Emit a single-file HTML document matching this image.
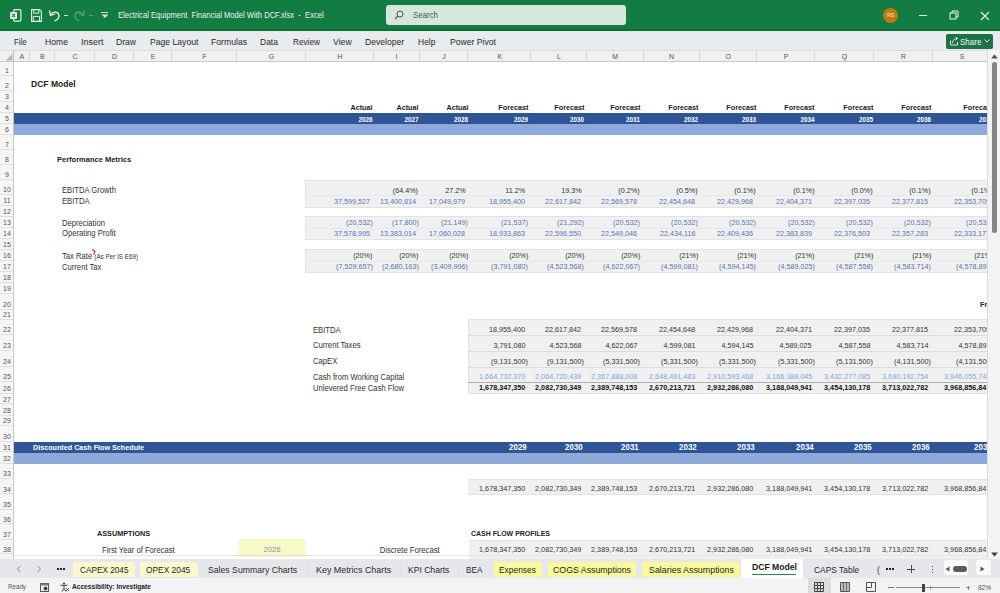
<!DOCTYPE html>
<html><head><meta charset="utf-8"><style>
html,body{margin:0;padding:0;}
body{width:1000px;height:593px;overflow:hidden;position:relative;background:#fff;font-family:"Liberation Sans",sans-serif;}
div{position:absolute;}
.t{white-space:nowrap;}
</style></head><body>
<div style="left:0px;top:0px;width:1000px;height:31px;background:#137c43;"></div>
<svg style="position:absolute;left:10px;top:9px" width="12" height="13" viewBox="0 0 12 13"><rect x="3.6" y="0.7" width="7.3" height="11.5" rx="1.2" fill="none" stroke="#e3f2e8" stroke-width="1.2"/><rect x="0.2" y="3" width="6.8" height="7" rx="0.9" fill="#eaf6ee"/><path d="M2.1 4.9 L5.1 8.1 M5.1 4.9 L2.1 8.1" stroke="#197a45" stroke-width="1.1"/></svg>
<svg style="position:absolute;left:31px;top:9px" width="11" height="13" viewBox="0 0 11 13"><path d="M0.6 0.6h8l1.8 1.8v10h-9.8z" fill="none" stroke="#e3f2e8" stroke-width="1.1"/><path d="M2.8 0.6v3.6h5v-3.6" fill="none" stroke="#e3f2e8" stroke-width="1"/><path d="M2.3 12.4v-5h6.2v5" fill="none" stroke="#e3f2e8" stroke-width="1"/></svg>
<svg style="position:absolute;left:48px;top:9px" width="14" height="13" viewBox="0 0 14 13"><path d="M3 5.5 C5 2 11 2.5 11 7 C11 9.5 9 11 6.5 12" fill="none" stroke="#e8f2ec" stroke-width="1.3"/><path d="M1.5 1.5 L2.5 6.5 L7 5" fill="none" stroke="#e8f2ec" stroke-width="1.3"/></svg>
<div style="left:64px;top:15px;width:4px;height:1px;background:#cfe3d6;"></div>
<svg style="position:absolute;left:72px;top:9px" width="14" height="13" viewBox="0 0 14 13"><path d="M11 5.5 C9 2 3 2.5 3 7 C3 9.5 5 11 7.5 12" fill="none" stroke="#5f9c78" stroke-width="1.3"/><path d="M12.5 1.5 L11.5 6.5 L7 5" fill="none" stroke="#5f9c78" stroke-width="1.3"/></svg>
<div style="left:89px;top:15px;width:4px;height:1px;background:#5f9c78;"></div>
<div style="left:101px;top:12px;width:7px;height:1px;background:#cfe3d6;"></div>
<svg style="position:absolute;left:101px;top:14px" width="8" height="5" viewBox="0 0 8 5"><path d="M0.5 0.5 L4 4 L7.5 0.5z" fill="#cfe3d6"/></svg>
<div class="t" style="left:118px;top:12.46px;font-size:8.2px;line-height:8.2px;color:#eaf3ee;transform:scaleX(0.9282);transform-origin:0 0;">Electrical Equipment&nbsp; Financial Model With DCF.xlsx&nbsp; -&nbsp; Excel</div>
<div style="left:385.5px;top:5px;width:240px;height:20px;background:#d5e6db;border-radius:3px;"></div>
<svg style="position:absolute;left:394px;top:10px" width="10" height="10" viewBox="0 0 10 10"><circle cx="6" cy="4" r="3" fill="none" stroke="#3d5a48" stroke-width="1"/><path d="M3.8 6.2 L1 9" stroke="#3d5a48" stroke-width="1.1"/></svg>
<div class="t" style="left:412.6px;top:11.86px;font-size:8.2px;line-height:8.2px;color:#44604f;transform:scaleX(0.9622);transform-origin:0 0;">Search</div>
<div style="left:883px;top:7.7px;width:15.4px;height:15.4px;background:#c27b14;border-radius:50%;"></div>
<div class="t" style="left:886.88px;top:13.14px;font-size:5.5px;line-height:5.5px;color:#f5e6c8;transform-origin:50% 0;">RS</div>
<div style="left:919px;top:15px;width:7.5px;height:1px;background:#e8f2ec;"></div>
<svg style="position:absolute;left:949px;top:10px" width="10" height="10" viewBox="0 0 10 10"><rect x="1" y="3" width="6" height="6" fill="none" stroke="#e8f2ec" stroke-width="1"/><path d="M3 3V1h6v6H7" fill="none" stroke="#e8f2ec" stroke-width="1"/></svg>
<svg style="position:absolute;left:980px;top:10.5px" width="10" height="10" viewBox="0 0 10 10"><path d="M1 1L9 9M9 1L1 9" stroke="#e8f2ec" stroke-width="1.1"/></svg>
<div style="left:0px;top:29px;width:1000px;height:2px;background:#0f6c39;"></div>
<div style="left:0px;top:31px;width:1000px;height:19px;background:#e9ebee;"></div>
<div style="left:0px;top:31px;width:1000px;height:1px;background:#dcefe3;"></div>
<div class="t" style="left:13.75px;top:38.19px;font-size:8.4px;line-height:8.4px;color:#2a2a2a;transform:scaleX(0.9235);transform-origin:0 0;">File</div>
<div class="t" style="left:44.5px;top:38.19px;font-size:8.4px;line-height:8.4px;color:#2a2a2a;transform:scaleX(1.0264);transform-origin:0 0;">Home</div>
<div class="t" style="left:80.5px;top:38.19px;font-size:8.4px;line-height:8.4px;color:#2a2a2a;transform:scaleX(1.0710);transform-origin:0 0;">Insert</div>
<div class="t" style="left:116.25px;top:38.19px;font-size:8.4px;line-height:8.4px;color:#2a2a2a;transform:scaleX(1.0203);transform-origin:0 0;">Draw</div>
<div class="t" style="left:149.5px;top:38.19px;font-size:8.4px;line-height:8.4px;color:#2a2a2a;transform:scaleX(1.0281);transform-origin:0 0;">Page Layout</div>
<div class="t" style="left:211.25px;top:38.19px;font-size:8.4px;line-height:8.4px;color:#2a2a2a;transform:scaleX(1.0355);transform-origin:0 0;">Formulas</div>
<div class="t" style="left:260px;top:38.19px;font-size:8.4px;line-height:8.4px;color:#2a2a2a;transform:scaleX(1.0144);transform-origin:0 0;">Data</div>
<div class="t" style="left:292.5px;top:38.19px;font-size:8.4px;line-height:8.4px;color:#2a2a2a;transform:scaleX(0.9803);transform-origin:0 0;">Review</div>
<div class="t" style="left:333px;top:38.19px;font-size:8.4px;line-height:8.4px;color:#2a2a2a;transform:scaleX(1.0384);transform-origin:0 0;">View</div>
<div class="t" style="left:365px;top:38.19px;font-size:8.4px;line-height:8.4px;color:#2a2a2a;transform:scaleX(1.0251);transform-origin:0 0;">Developer</div>
<div class="t" style="left:418px;top:38.19px;font-size:8.4px;line-height:8.4px;color:#2a2a2a;transform:scaleX(1.0129);transform-origin:0 0;">Help</div>
<div class="t" style="left:449.5px;top:38.19px;font-size:8.4px;line-height:8.4px;color:#2a2a2a;transform:scaleX(1.0263);transform-origin:0 0;">Power Pivot</div>
<div style="left:946px;top:33.5px;width:46.5px;height:15px;background:#1e7145;border-radius:2px;"></div>
<svg style="position:absolute;left:949px;top:36px" width="10" height="10" viewBox="0 0 10 10"><path d="M1.5 4.5v4.5h7v-3" fill="none" stroke="#e8f2ec" stroke-width="0.9"/><path d="M3.5 7 C3.5 4 5.5 2.5 8.5 2.5 M6.5 0.8 L8.6 2.5 L6.5 4.2" fill="none" stroke="#e8f2ec" stroke-width="0.9"/></svg>
<div class="t" style="left:960px;top:38.19px;font-size:8.4px;line-height:8.4px;color:#f2f8f4;transform:scaleX(0.9591);transform-origin:0 0;">Share</div>
<svg style="position:absolute;left:984px;top:39px" width="6" height="4" viewBox="0 0 6 4"><path d="M0.5 0.5L3 3L5.5 0.5" fill="none" stroke="#e8f2ec" stroke-width="0.9"/></svg>
<div style="left:0px;top:50px;width:987px;height:12px;background:#f0f0f0;"></div>
<div style="left:0px;top:61px;width:987px;height:1px;background:#c8c8c8;"></div>
<div style="left:0px;top:49.5px;width:1000px;height:1px;background:#dcdde0;"></div>
<div style="left:0px;top:62px;width:987px;height:497px;background:#ffffff;"></div>
<div style="left:0px;top:62px;width:14px;height:497px;background:#f5f5f5;"></div>
<div style="left:13px;top:50px;width:1px;height:509px;background:#c8c8c8;"></div>
<svg style="position:absolute;left:5px;top:53px" width="8" height="8" viewBox="0 0 8 8"><path d="M7.5 0.5V7.5H0.5z" fill="#b9b9b9"/></svg>
<div id="sheet" style="left:0;top:0;width:987px;height:559px;overflow:hidden;">
<div style="left:29px;top:51px;width:1px;height:10px;background:#d9d9d9;"></div>
<div class="t" style="left:19.42px;top:53.37px;font-size:7px;line-height:7px;color:#555;transform-origin:50% 0;">A</div>
<div style="left:54px;top:51px;width:1px;height:10px;background:#d9d9d9;"></div>
<div class="t" style="left:39.92px;top:53.37px;font-size:7px;line-height:7px;color:#555;transform-origin:50% 0;">B</div>
<div style="left:94px;top:51px;width:1px;height:10px;background:#d9d9d9;"></div>
<div class="t" style="left:72.47px;top:53.37px;font-size:7px;line-height:7px;color:#555;transform-origin:50% 0;">C</div>
<div style="left:133px;top:51px;width:1px;height:10px;background:#d9d9d9;"></div>
<div class="t" style="left:111.97px;top:53.37px;font-size:7px;line-height:7px;color:#555;transform-origin:50% 0;">D</div>
<div style="left:171px;top:51px;width:1px;height:10px;background:#d9d9d9;"></div>
<div class="t" style="left:150.67px;top:53.37px;font-size:7px;line-height:7px;color:#555;transform-origin:50% 0;">E</div>
<div style="left:236px;top:51px;width:1px;height:10px;background:#d9d9d9;"></div>
<div class="t" style="left:202.36px;top:53.37px;font-size:7px;line-height:7px;color:#555;transform-origin:50% 0;">F</div>
<div style="left:305px;top:51px;width:1px;height:10px;background:#d9d9d9;"></div>
<div class="t" style="left:268.78px;top:53.37px;font-size:7px;line-height:7px;color:#555;transform-origin:50% 0;">G</div>
<div style="left:373px;top:51px;width:1px;height:10px;background:#d9d9d9;"></div>
<div class="t" style="left:337.22px;top:53.37px;font-size:7px;line-height:7px;color:#555;transform-origin:50% 0;">H</div>
<div style="left:419px;top:51px;width:1px;height:10px;background:#d9d9d9;"></div>
<div class="t" style="left:395.53px;top:53.37px;font-size:7px;line-height:7px;color:#555;transform-origin:50% 0;">I</div>
<div style="left:467px;top:51px;width:1px;height:10px;background:#d9d9d9;"></div>
<div class="t" style="left:442.25px;top:53.37px;font-size:7px;line-height:7px;color:#555;transform-origin:50% 0;">J</div>
<div style="left:530px;top:51px;width:1px;height:10px;background:#d9d9d9;"></div>
<div class="t" style="left:497.42px;top:53.37px;font-size:7px;line-height:7px;color:#555;transform-origin:50% 0;">K</div>
<div style="left:586px;top:51px;width:1px;height:10px;background:#d9d9d9;"></div>
<div class="t" style="left:557.05px;top:53.37px;font-size:7px;line-height:7px;color:#555;transform-origin:50% 0;">L</div>
<div style="left:643px;top:51px;width:1px;height:10px;background:#d9d9d9;"></div>
<div class="t" style="left:612.33px;top:53.37px;font-size:7px;line-height:7px;color:#555;transform-origin:50% 0;">M</div>
<div style="left:699px;top:51px;width:1px;height:10px;background:#d9d9d9;"></div>
<div class="t" style="left:668.97px;top:53.37px;font-size:7px;line-height:7px;color:#555;transform-origin:50% 0;">N</div>
<div style="left:756px;top:51px;width:1px;height:10px;background:#d9d9d9;"></div>
<div class="t" style="left:725.53px;top:53.37px;font-size:7px;line-height:7px;color:#555;transform-origin:50% 0;">O</div>
<div style="left:814px;top:51px;width:1px;height:10px;background:#d9d9d9;"></div>
<div class="t" style="left:783.67px;top:53.37px;font-size:7px;line-height:7px;color:#555;transform-origin:50% 0;">P</div>
<div style="left:873px;top:51px;width:1px;height:10px;background:#d9d9d9;"></div>
<div class="t" style="left:841.78px;top:53.37px;font-size:7px;line-height:7px;color:#555;transform-origin:50% 0;">Q</div>
<div style="left:932px;top:51px;width:1px;height:10px;background:#d9d9d9;"></div>
<div class="t" style="left:900.97px;top:53.37px;font-size:7px;line-height:7px;color:#555;transform-origin:50% 0;">R</div>
<div style="left:990px;top:51px;width:1px;height:10px;background:#d9d9d9;"></div>
<div class="t" style="left:959.67px;top:53.37px;font-size:7px;line-height:7px;color:#555;transform-origin:50% 0;">S</div>
<div style="left:0px;top:75px;width:13px;height:1px;background:#e0e0e0;"></div>
<div class="t" style="left:5.05px;top:67.07px;font-size:7px;line-height:7px;color:#555;transform-origin:50% 0;">1</div>
<div style="left:0px;top:90px;width:13px;height:1px;background:#e0e0e0;"></div>
<div class="t" style="left:5.05px;top:82.07px;font-size:7px;line-height:7px;color:#555;transform-origin:50% 0;">2</div>
<div style="left:0px;top:101px;width:13px;height:1px;background:#e0e0e0;"></div>
<div class="t" style="left:5.05px;top:93.07px;font-size:7px;line-height:7px;color:#555;transform-origin:50% 0;">3</div>
<div style="left:0px;top:112px;width:13px;height:1px;background:#e0e0e0;"></div>
<div class="t" style="left:5.05px;top:104.07px;font-size:7px;line-height:7px;color:#555;transform-origin:50% 0;">4</div>
<div style="left:0px;top:123px;width:13px;height:1px;background:#e0e0e0;"></div>
<div class="t" style="left:5.05px;top:115.07px;font-size:7px;line-height:7px;color:#555;transform-origin:50% 0;">5</div>
<div style="left:0px;top:134px;width:13px;height:1px;background:#e0e0e0;"></div>
<div class="t" style="left:5.05px;top:126.07px;font-size:7px;line-height:7px;color:#555;transform-origin:50% 0;">6</div>
<div style="left:0px;top:149px;width:13px;height:1px;background:#e0e0e0;"></div>
<div class="t" style="left:5.05px;top:141.07px;font-size:7px;line-height:7px;color:#555;transform-origin:50% 0;">7</div>
<div style="left:0px;top:164px;width:13px;height:1px;background:#e0e0e0;"></div>
<div class="t" style="left:5.05px;top:156.07px;font-size:7px;line-height:7px;color:#555;transform-origin:50% 0;">8</div>
<div style="left:0px;top:179px;width:13px;height:1px;background:#e0e0e0;"></div>
<div class="t" style="left:5.05px;top:171.07px;font-size:7px;line-height:7px;color:#555;transform-origin:50% 0;">9</div>
<div style="left:0px;top:194px;width:13px;height:1px;background:#e0e0e0;"></div>
<div class="t" style="left:3.11px;top:186.07px;font-size:7px;line-height:7px;color:#555;transform-origin:50% 0;">10</div>
<div style="left:0px;top:205px;width:13px;height:1px;background:#e0e0e0;"></div>
<div class="t" style="left:3.37px;top:197.07px;font-size:7px;line-height:7px;color:#555;transform-origin:50% 0;">11</div>
<div style="left:0px;top:216px;width:13px;height:1px;background:#e0e0e0;"></div>
<div class="t" style="left:3.11px;top:208.07px;font-size:7px;line-height:7px;color:#555;transform-origin:50% 0;">12</div>
<div style="left:0px;top:227px;width:13px;height:1px;background:#e0e0e0;"></div>
<div class="t" style="left:3.11px;top:219.07px;font-size:7px;line-height:7px;color:#555;transform-origin:50% 0;">13</div>
<div style="left:0px;top:238px;width:13px;height:1px;background:#e0e0e0;"></div>
<div class="t" style="left:3.11px;top:230.07px;font-size:7px;line-height:7px;color:#555;transform-origin:50% 0;">14</div>
<div style="left:0px;top:249px;width:13px;height:1px;background:#e0e0e0;"></div>
<div class="t" style="left:3.11px;top:241.07px;font-size:7px;line-height:7px;color:#555;transform-origin:50% 0;">15</div>
<div style="left:0px;top:260px;width:13px;height:1px;background:#e0e0e0;"></div>
<div class="t" style="left:3.11px;top:252.07px;font-size:7px;line-height:7px;color:#555;transform-origin:50% 0;">16</div>
<div style="left:0px;top:271px;width:13px;height:1px;background:#e0e0e0;"></div>
<div class="t" style="left:3.11px;top:263.07px;font-size:7px;line-height:7px;color:#555;transform-origin:50% 0;">17</div>
<div style="left:0px;top:282px;width:13px;height:1px;background:#e0e0e0;"></div>
<div class="t" style="left:3.11px;top:274.07px;font-size:7px;line-height:7px;color:#555;transform-origin:50% 0;">18</div>
<div style="left:0px;top:293px;width:13px;height:1px;background:#e0e0e0;"></div>
<div class="t" style="left:3.11px;top:285.07px;font-size:7px;line-height:7px;color:#555;transform-origin:50% 0;">19</div>
<div style="left:0px;top:309px;width:13px;height:1px;background:#e0e0e0;"></div>
<div class="t" style="left:3.11px;top:300.57px;font-size:7px;line-height:7px;color:#555;transform-origin:50% 0;">20</div>
<div style="left:0px;top:319px;width:13px;height:1px;background:#e0e0e0;"></div>
<div class="t" style="left:3.11px;top:311.07px;font-size:7px;line-height:7px;color:#555;transform-origin:50% 0;">21</div>
<div style="left:0px;top:334px;width:13px;height:1px;background:#e0e0e0;"></div>
<div class="t" style="left:3.11px;top:326.07px;font-size:7px;line-height:7px;color:#555;transform-origin:50% 0;">22</div>
<div style="left:0px;top:350px;width:13px;height:1px;background:#e0e0e0;"></div>
<div class="t" style="left:3.11px;top:342.07px;font-size:7px;line-height:7px;color:#555;transform-origin:50% 0;">23</div>
<div style="left:0px;top:366px;width:13px;height:1px;background:#e0e0e0;"></div>
<div class="t" style="left:3.11px;top:358.07px;font-size:7px;line-height:7px;color:#555;transform-origin:50% 0;">24</div>
<div style="left:0px;top:381px;width:13px;height:1px;background:#e0e0e0;"></div>
<div class="t" style="left:3.11px;top:373.07px;font-size:7px;line-height:7px;color:#555;transform-origin:50% 0;">25</div>
<div style="left:0px;top:393px;width:13px;height:1px;background:#e0e0e0;"></div>
<div class="t" style="left:3.11px;top:385.07px;font-size:7px;line-height:7px;color:#555;transform-origin:50% 0;">26</div>
<div style="left:0px;top:403px;width:13px;height:1px;background:#e0e0e0;"></div>
<div class="t" style="left:3.11px;top:395.57px;font-size:7px;line-height:7px;color:#555;transform-origin:50% 0;">27</div>
<div style="left:0px;top:415px;width:13px;height:1px;background:#e0e0e0;"></div>
<div class="t" style="left:3.11px;top:406.57px;font-size:7px;line-height:7px;color:#555;transform-origin:50% 0;">28</div>
<div style="left:0px;top:425px;width:13px;height:1px;background:#e0e0e0;"></div>
<div class="t" style="left:3.11px;top:417.07px;font-size:7px;line-height:7px;color:#555;transform-origin:50% 0;">29</div>
<div style="left:0px;top:441px;width:13px;height:1px;background:#e0e0e0;"></div>
<div class="t" style="left:3.11px;top:433.07px;font-size:7px;line-height:7px;color:#555;transform-origin:50% 0;">30</div>
<div style="left:0px;top:451px;width:13px;height:1px;background:#e0e0e0;"></div>
<div class="t" style="left:3.11px;top:443.57px;font-size:7px;line-height:7px;color:#555;transform-origin:50% 0;">31</div>
<div style="left:0px;top:463px;width:13px;height:1px;background:#e0e0e0;"></div>
<div class="t" style="left:3.11px;top:454.57px;font-size:7px;line-height:7px;color:#555;transform-origin:50% 0;">32</div>
<div style="left:0px;top:478px;width:13px;height:1px;background:#e0e0e0;"></div>
<div class="t" style="left:3.11px;top:470.07px;font-size:7px;line-height:7px;color:#555;transform-origin:50% 0;">33</div>
<div style="left:0px;top:493px;width:13px;height:1px;background:#e0e0e0;"></div>
<div class="t" style="left:3.11px;top:485.57px;font-size:7px;line-height:7px;color:#555;transform-origin:50% 0;">34</div>
<div style="left:0px;top:509px;width:13px;height:1px;background:#e0e0e0;"></div>
<div class="t" style="left:3.11px;top:500.57px;font-size:7px;line-height:7px;color:#555;transform-origin:50% 0;">35</div>
<div style="left:0px;top:523px;width:13px;height:1px;background:#e0e0e0;"></div>
<div class="t" style="left:3.11px;top:515.57px;font-size:7px;line-height:7px;color:#555;transform-origin:50% 0;">36</div>
<div style="left:0px;top:539px;width:13px;height:1px;background:#e0e0e0;"></div>
<div class="t" style="left:3.11px;top:530.57px;font-size:7px;line-height:7px;color:#555;transform-origin:50% 0;">37</div>
<div style="left:0px;top:553px;width:13px;height:1px;background:#e0e0e0;"></div>
<div class="t" style="left:3.11px;top:545.57px;font-size:7px;line-height:7px;color:#555;transform-origin:50% 0;">38</div>
<div style="left:0px;top:569px;width:13px;height:1px;background:#e0e0e0;"></div>
<div class="t" style="left:3.11px;top:561.07px;font-size:7px;line-height:7px;color:#555;transform-origin:50% 0;">39</div>
<div style="left:14px;top:113px;width:973px;height:11px;background:#2f5597;"></div>
<div style="left:14px;top:124px;width:973px;height:11px;background:#8eaadb;"></div>
<div style="left:14px;top:442px;width:973px;height:10.5px;background:#2f5597;"></div>
<div style="left:14px;top:452.5px;width:973px;height:11px;background:#8eaadb;"></div>
<div class="t" style="left:31.4px;top:79.98px;font-size:9px;line-height:9px;color:#222;font-weight:bold;transform:scaleX(0.9469);transform-origin:0 0;">DCF Model</div>
<div class="t" style="right:614.5px;top:103.83px;font-size:8px;line-height:8px;color:#222;font-weight:bold;transform:scaleX(0.9);transform-origin:100% 0;">Actual</div>
<div class="t" style="right:568.5px;top:103.83px;font-size:8px;line-height:8px;color:#222;font-weight:bold;transform:scaleX(0.9);transform-origin:100% 0;">Actual</div>
<div class="t" style="right:519px;top:103.83px;font-size:8px;line-height:8px;color:#222;font-weight:bold;transform:scaleX(0.9);transform-origin:100% 0;">Actual</div>
<div class="t" style="right:459px;top:103.83px;font-size:8px;line-height:8px;color:#222;font-weight:bold;transform:scaleX(0.9);transform-origin:100% 0;">Forecast</div>
<div class="t" style="right:403px;top:103.83px;font-size:8px;line-height:8px;color:#222;font-weight:bold;transform:scaleX(0.9);transform-origin:100% 0;">Forecast</div>
<div class="t" style="right:347px;top:103.83px;font-size:8px;line-height:8px;color:#222;font-weight:bold;transform:scaleX(0.9);transform-origin:100% 0;">Forecast</div>
<div class="t" style="right:289px;top:103.83px;font-size:8px;line-height:8px;color:#222;font-weight:bold;transform:scaleX(0.9);transform-origin:100% 0;">Forecast</div>
<div class="t" style="right:231px;top:103.83px;font-size:8px;line-height:8px;color:#222;font-weight:bold;transform:scaleX(0.9);transform-origin:100% 0;">Forecast</div>
<div class="t" style="right:172.5px;top:103.83px;font-size:8px;line-height:8px;color:#222;font-weight:bold;transform:scaleX(0.9);transform-origin:100% 0;">Forecast</div>
<div class="t" style="right:114px;top:103.83px;font-size:8px;line-height:8px;color:#222;font-weight:bold;transform:scaleX(0.9);transform-origin:100% 0;">Forecast</div>
<div class="t" style="right:56px;top:103.83px;font-size:8px;line-height:8px;color:#222;font-weight:bold;transform:scaleX(0.9);transform-origin:100% 0;">Forecast</div>
<div class="t" style="right:-6px;top:103.83px;font-size:8px;line-height:8px;color:#222;font-weight:bold;transform:scaleX(0.9);transform-origin:100% 0;">Forecast</div>
<div class="t" style="right:614.5px;top:116.67px;font-size:6.3px;line-height:6.3px;color:#fff;font-weight:bold;transform-origin:100% 0;">2026</div>
<div class="t" style="right:568.5px;top:116.67px;font-size:6.3px;line-height:6.3px;color:#fff;font-weight:bold;transform-origin:100% 0;">2027</div>
<div class="t" style="right:519px;top:116.67px;font-size:6.3px;line-height:6.3px;color:#fff;font-weight:bold;transform-origin:100% 0;">2028</div>
<div class="t" style="right:459px;top:116.67px;font-size:6.3px;line-height:6.3px;color:#fff;font-weight:bold;transform-origin:100% 0;">2029</div>
<div class="t" style="right:403px;top:116.67px;font-size:6.3px;line-height:6.3px;color:#fff;font-weight:bold;transform-origin:100% 0;">2030</div>
<div class="t" style="right:347px;top:116.67px;font-size:6.3px;line-height:6.3px;color:#fff;font-weight:bold;transform-origin:100% 0;">2031</div>
<div class="t" style="right:289px;top:116.67px;font-size:6.3px;line-height:6.3px;color:#fff;font-weight:bold;transform-origin:100% 0;">2032</div>
<div class="t" style="right:231px;top:116.67px;font-size:6.3px;line-height:6.3px;color:#fff;font-weight:bold;transform-origin:100% 0;">2033</div>
<div class="t" style="right:172.5px;top:116.67px;font-size:6.3px;line-height:6.3px;color:#fff;font-weight:bold;transform-origin:100% 0;">2034</div>
<div class="t" style="right:114px;top:116.67px;font-size:6.3px;line-height:6.3px;color:#fff;font-weight:bold;transform-origin:100% 0;">2035</div>
<div class="t" style="right:56px;top:116.67px;font-size:6.3px;line-height:6.3px;color:#fff;font-weight:bold;transform-origin:100% 0;">2036</div>
<div class="t" style="right:-6px;top:116.67px;font-size:6.3px;line-height:6.3px;color:#fff;font-weight:bold;transform-origin:100% 0;">2037</div>
<div class="t" style="left:56.7px;top:155.63px;font-size:8px;line-height:8px;color:#222;font-weight:bold;transform:scaleX(0.9375);transform-origin:0 0;">Performance Metrics</div>
<div style="left:305px;top:180px;width:682px;height:27.5px;background:#f0f0f0;"></div>
<div style="left:305px;top:180px;width:682px;height:1px;background:#e2e2e2;"></div>
<div style="left:305px;top:206.5px;width:682px;height:1px;background:#e2e2e2;"></div>
<div style="left:305px;top:180px;width:1px;height:27.5px;background:#e2e2e2;"></div>
<div style="left:305px;top:216px;width:682px;height:24px;background:#f0f0f0;"></div>
<div style="left:305px;top:216px;width:682px;height:1px;background:#e2e2e2;"></div>
<div style="left:305px;top:239px;width:682px;height:1px;background:#e2e2e2;"></div>
<div style="left:305px;top:216px;width:1px;height:24px;background:#e2e2e2;"></div>
<div style="left:305px;top:249px;width:682px;height:24px;background:#f0f0f0;"></div>
<div style="left:305px;top:249px;width:682px;height:1px;background:#e2e2e2;"></div>
<div style="left:305px;top:272px;width:682px;height:1px;background:#e2e2e2;"></div>
<div style="left:305px;top:249px;width:1px;height:24px;background:#e2e2e2;"></div>
<div style="left:305px;top:195px;width:682px;height:1px;background:#e8e8e8;"></div>
<div style="left:305px;top:228px;width:682px;height:1px;background:#e8e8e8;"></div>
<div style="left:305px;top:261px;width:682px;height:1px;background:#e8e8e8;"></div>
<svg style="position:absolute;left:91px;top:249px" width="5" height="6" viewBox="0 0 5 6"><path d="M1 0.5 L4 2.5 L2.5 5.5" fill="none" stroke="#d0244a" stroke-width="1.2"/></svg>
<div class="t" style="left:62px;top:186.40px;font-size:8.5px;line-height:8.5px;color:#333333;transform:scaleX(0.9);transform-origin:0 0;">EBITDA Growth</div>
<div class="t" style="right:568.5px;top:186.83px;font-size:8px;line-height:8px;color:#333333;transform:scaleX(0.9);transform-origin:100% 0;">(64.4%)</div>
<div class="t" style="right:521.5px;top:186.83px;font-size:8px;line-height:8px;color:#333333;transform:scaleX(0.9);transform-origin:100% 0;">27.2%</div>
<div class="t" style="right:461.5px;top:186.83px;font-size:8px;line-height:8px;color:#333333;transform:scaleX(0.9);transform-origin:100% 0;">11.2%</div>
<div class="t" style="right:405.5px;top:186.83px;font-size:8px;line-height:8px;color:#333333;transform:scaleX(0.9);transform-origin:100% 0;">19.3%</div>
<div class="t" style="right:347px;top:186.83px;font-size:8px;line-height:8px;color:#333333;transform:scaleX(0.9);transform-origin:100% 0;">(0.2%)</div>
<div class="t" style="right:289px;top:186.83px;font-size:8px;line-height:8px;color:#333333;transform:scaleX(0.9);transform-origin:100% 0;">(0.5%)</div>
<div class="t" style="right:231px;top:186.83px;font-size:8px;line-height:8px;color:#333333;transform:scaleX(0.9);transform-origin:100% 0;">(0.1%)</div>
<div class="t" style="right:172.5px;top:186.83px;font-size:8px;line-height:8px;color:#333333;transform:scaleX(0.9);transform-origin:100% 0;">(0.1%)</div>
<div class="t" style="right:114px;top:186.83px;font-size:8px;line-height:8px;color:#333333;transform:scaleX(0.9);transform-origin:100% 0;">(0.0%)</div>
<div class="t" style="right:56px;top:186.83px;font-size:8px;line-height:8px;color:#333333;transform:scaleX(0.9);transform-origin:100% 0;">(0.1%)</div>
<div class="t" style="right:-6px;top:186.83px;font-size:8px;line-height:8px;color:#333333;transform:scaleX(0.9);transform-origin:100% 0;">(0.1%)</div>
<div class="t" style="left:62px;top:197.10px;font-size:8.5px;line-height:8.5px;color:#333333;transform:scaleX(0.9);transform-origin:0 0;">EBITDA</div>
<div class="t" style="right:617.0px;top:197.53px;font-size:8px;line-height:8px;color:#5873b8;transform:scaleX(0.9);transform-origin:100% 0;">37,599,527</div>
<div class="t" style="right:571.0px;top:197.53px;font-size:8px;line-height:8px;color:#5873b8;transform:scaleX(0.9);transform-origin:100% 0;">13,400,814</div>
<div class="t" style="right:521.5px;top:197.53px;font-size:8px;line-height:8px;color:#5873b8;transform:scaleX(0.9);transform-origin:100% 0;">17,049,979</div>
<div class="t" style="right:461.5px;top:197.53px;font-size:8px;line-height:8px;color:#5873b8;transform:scaleX(0.9);transform-origin:100% 0;">18,955,400</div>
<div class="t" style="right:405.5px;top:197.53px;font-size:8px;line-height:8px;color:#5873b8;transform:scaleX(0.9);transform-origin:100% 0;">22,617,842</div>
<div class="t" style="right:349.5px;top:197.53px;font-size:8px;line-height:8px;color:#5873b8;transform:scaleX(0.9);transform-origin:100% 0;">22,569,578</div>
<div class="t" style="right:291.5px;top:197.53px;font-size:8px;line-height:8px;color:#5873b8;transform:scaleX(0.9);transform-origin:100% 0;">22,454,648</div>
<div class="t" style="right:233.5px;top:197.53px;font-size:8px;line-height:8px;color:#5873b8;transform:scaleX(0.9);transform-origin:100% 0;">22,429,968</div>
<div class="t" style="right:175.0px;top:197.53px;font-size:8px;line-height:8px;color:#5873b8;transform:scaleX(0.9);transform-origin:100% 0;">22,404,371</div>
<div class="t" style="right:116.5px;top:197.53px;font-size:8px;line-height:8px;color:#5873b8;transform:scaleX(0.9);transform-origin:100% 0;">22,397,035</div>
<div class="t" style="right:58.5px;top:197.53px;font-size:8px;line-height:8px;color:#5873b8;transform:scaleX(0.9);transform-origin:100% 0;">22,377,815</div>
<div class="t" style="right:-3.5px;top:197.53px;font-size:8px;line-height:8px;color:#5873b8;transform:scaleX(0.9);transform-origin:100% 0;">22,353,709</div>
<div class="t" style="left:62px;top:218.90px;font-size:8.5px;line-height:8.5px;color:#333333;transform:scaleX(0.9);transform-origin:0 0;">Depreciation</div>
<div class="t" style="right:614.5px;top:219.33px;font-size:8px;line-height:8px;color:#5873b8;transform:scaleX(0.9);transform-origin:100% 0;">(20,532)</div>
<div class="t" style="right:568.5px;top:219.33px;font-size:8px;line-height:8px;color:#5873b8;transform:scaleX(0.9);transform-origin:100% 0;">(17,800)</div>
<div class="t" style="right:519px;top:219.33px;font-size:8px;line-height:8px;color:#5873b8;transform:scaleX(0.9);transform-origin:100% 0;">(21,149)</div>
<div class="t" style="right:459px;top:219.33px;font-size:8px;line-height:8px;color:#5873b8;transform:scaleX(0.9);transform-origin:100% 0;">(21,537)</div>
<div class="t" style="right:403px;top:219.33px;font-size:8px;line-height:8px;color:#5873b8;transform:scaleX(0.9);transform-origin:100% 0;">(21,292)</div>
<div class="t" style="right:347px;top:219.33px;font-size:8px;line-height:8px;color:#5873b8;transform:scaleX(0.9);transform-origin:100% 0;">(20,532)</div>
<div class="t" style="right:289px;top:219.33px;font-size:8px;line-height:8px;color:#5873b8;transform:scaleX(0.9);transform-origin:100% 0;">(20,532)</div>
<div class="t" style="right:231px;top:219.33px;font-size:8px;line-height:8px;color:#5873b8;transform:scaleX(0.9);transform-origin:100% 0;">(20,532)</div>
<div class="t" style="right:172.5px;top:219.33px;font-size:8px;line-height:8px;color:#5873b8;transform:scaleX(0.9);transform-origin:100% 0;">(20,532)</div>
<div class="t" style="right:114px;top:219.33px;font-size:8px;line-height:8px;color:#5873b8;transform:scaleX(0.9);transform-origin:100% 0;">(20,532)</div>
<div class="t" style="right:56px;top:219.33px;font-size:8px;line-height:8px;color:#5873b8;transform:scaleX(0.9);transform-origin:100% 0;">(20,532)</div>
<div class="t" style="right:-6px;top:219.33px;font-size:8px;line-height:8px;color:#5873b8;transform:scaleX(0.9);transform-origin:100% 0;">(20,532)</div>
<div class="t" style="left:62px;top:229.40px;font-size:8.5px;line-height:8.5px;color:#333333;transform:scaleX(0.9);transform-origin:0 0;">Operating Profit</div>
<div class="t" style="right:617.0px;top:229.83px;font-size:8px;line-height:8px;color:#5873b8;transform:scaleX(0.9);transform-origin:100% 0;">37,578,995</div>
<div class="t" style="right:571.0px;top:229.83px;font-size:8px;line-height:8px;color:#5873b8;transform:scaleX(0.9);transform-origin:100% 0;">13,383,014</div>
<div class="t" style="right:521.5px;top:229.83px;font-size:8px;line-height:8px;color:#5873b8;transform:scaleX(0.9);transform-origin:100% 0;">17,060,028</div>
<div class="t" style="right:461.5px;top:229.83px;font-size:8px;line-height:8px;color:#5873b8;transform:scaleX(0.9);transform-origin:100% 0;">18,933,863</div>
<div class="t" style="right:405.5px;top:229.83px;font-size:8px;line-height:8px;color:#5873b8;transform:scaleX(0.9);transform-origin:100% 0;">22,596,550</div>
<div class="t" style="right:349.5px;top:229.83px;font-size:8px;line-height:8px;color:#5873b8;transform:scaleX(0.9);transform-origin:100% 0;">22,549,046</div>
<div class="t" style="right:291.5px;top:229.83px;font-size:8px;line-height:8px;color:#5873b8;transform:scaleX(0.9);transform-origin:100% 0;">22,434,116</div>
<div class="t" style="right:233.5px;top:229.83px;font-size:8px;line-height:8px;color:#5873b8;transform:scaleX(0.9);transform-origin:100% 0;">22,409,436</div>
<div class="t" style="right:175.0px;top:229.83px;font-size:8px;line-height:8px;color:#5873b8;transform:scaleX(0.9);transform-origin:100% 0;">22,383,839</div>
<div class="t" style="right:116.5px;top:229.83px;font-size:8px;line-height:8px;color:#5873b8;transform:scaleX(0.9);transform-origin:100% 0;">22,376,503</div>
<div class="t" style="right:58.5px;top:229.83px;font-size:8px;line-height:8px;color:#5873b8;transform:scaleX(0.9);transform-origin:100% 0;">22,357,283</div>
<div class="t" style="right:-3.5px;top:229.83px;font-size:8px;line-height:8px;color:#5873b8;transform:scaleX(0.9);transform-origin:100% 0;">22,333,177</div>
<div class="t" style="left:62px;top:252.00px;font-size:8.5px;line-height:8.5px;color:#333333;transform:scaleX(0.9);transform-origin:0 0;">Tax Rate <span style="font-size:7px">(As Per IS E69)</span></div>
<div class="t" style="right:614.5px;top:252.43px;font-size:8px;line-height:8px;color:#333333;transform:scaleX(0.9);transform-origin:100% 0;">(20%)</div>
<div class="t" style="right:568.5px;top:252.43px;font-size:8px;line-height:8px;color:#333333;transform:scaleX(0.9);transform-origin:100% 0;">(20%)</div>
<div class="t" style="right:519px;top:252.43px;font-size:8px;line-height:8px;color:#333333;transform:scaleX(0.9);transform-origin:100% 0;">(20%)</div>
<div class="t" style="right:459px;top:252.43px;font-size:8px;line-height:8px;color:#333333;transform:scaleX(0.9);transform-origin:100% 0;">(20%)</div>
<div class="t" style="right:403px;top:252.43px;font-size:8px;line-height:8px;color:#333333;transform:scaleX(0.9);transform-origin:100% 0;">(20%)</div>
<div class="t" style="right:347px;top:252.43px;font-size:8px;line-height:8px;color:#333333;transform:scaleX(0.9);transform-origin:100% 0;">(20%)</div>
<div class="t" style="right:289px;top:252.43px;font-size:8px;line-height:8px;color:#333333;transform:scaleX(0.9);transform-origin:100% 0;">(21%)</div>
<div class="t" style="right:231px;top:252.43px;font-size:8px;line-height:8px;color:#333333;transform:scaleX(0.9);transform-origin:100% 0;">(21%)</div>
<div class="t" style="right:172.5px;top:252.43px;font-size:8px;line-height:8px;color:#333333;transform:scaleX(0.9);transform-origin:100% 0;">(21%)</div>
<div class="t" style="right:114px;top:252.43px;font-size:8px;line-height:8px;color:#333333;transform:scaleX(0.9);transform-origin:100% 0;">(21%)</div>
<div class="t" style="right:56px;top:252.43px;font-size:8px;line-height:8px;color:#333333;transform:scaleX(0.9);transform-origin:100% 0;">(21%)</div>
<div class="t" style="right:-6px;top:252.43px;font-size:8px;line-height:8px;color:#333333;transform:scaleX(0.9);transform-origin:100% 0;">(21%)</div>
<div class="t" style="left:62px;top:262.60px;font-size:8.5px;line-height:8.5px;color:#333333;transform:scaleX(0.9);transform-origin:0 0;">Current Tax</div>
<div class="t" style="right:614.5px;top:263.03px;font-size:8px;line-height:8px;color:#5873b8;transform:scaleX(0.9);transform-origin:100% 0;">(7,529,657)</div>
<div class="t" style="right:568.5px;top:263.03px;font-size:8px;line-height:8px;color:#5873b8;transform:scaleX(0.9);transform-origin:100% 0;">(2,680,163)</div>
<div class="t" style="right:519px;top:263.03px;font-size:8px;line-height:8px;color:#5873b8;transform:scaleX(0.9);transform-origin:100% 0;">(3,409,996)</div>
<div class="t" style="right:459px;top:263.03px;font-size:8px;line-height:8px;color:#5873b8;transform:scaleX(0.9);transform-origin:100% 0;">(3,791,080)</div>
<div class="t" style="right:403px;top:263.03px;font-size:8px;line-height:8px;color:#5873b8;transform:scaleX(0.9);transform-origin:100% 0;">(4,523,568)</div>
<div class="t" style="right:347px;top:263.03px;font-size:8px;line-height:8px;color:#5873b8;transform:scaleX(0.9);transform-origin:100% 0;">(4,622,067)</div>
<div class="t" style="right:289px;top:263.03px;font-size:8px;line-height:8px;color:#5873b8;transform:scaleX(0.9);transform-origin:100% 0;">(4,599,081)</div>
<div class="t" style="right:231px;top:263.03px;font-size:8px;line-height:8px;color:#5873b8;transform:scaleX(0.9);transform-origin:100% 0;">(4,594,145)</div>
<div class="t" style="right:172.5px;top:263.03px;font-size:8px;line-height:8px;color:#5873b8;transform:scaleX(0.9);transform-origin:100% 0;">(4,589,025)</div>
<div class="t" style="right:114px;top:263.03px;font-size:8px;line-height:8px;color:#5873b8;transform:scaleX(0.9);transform-origin:100% 0;">(4,587,558)</div>
<div class="t" style="right:56px;top:263.03px;font-size:8px;line-height:8px;color:#5873b8;transform:scaleX(0.9);transform-origin:100% 0;">(4,583,714)</div>
<div class="t" style="right:-6px;top:263.03px;font-size:8px;line-height:8px;color:#5873b8;transform:scaleX(0.9);transform-origin:100% 0;">(4,578,891)</div>
<div class="t" style="left:980px;top:300.62px;font-size:7.3px;line-height:7.3px;color:#222;font-weight:bold;transform-origin:0 0;">Free Cash Flow</div>
<div style="left:468px;top:319px;width:519px;height:74px;background:#f0f0f0;"></div>
<div style="left:468px;top:319px;width:519px;height:1px;background:#e2e2e2;"></div>
<div style="left:468px;top:319px;width:1px;height:74px;background:#e2e2e2;"></div>
<div style="left:468px;top:392.5px;width:519px;height:1px;background:#e2e2e2;"></div>
<div style="left:468px;top:335px;width:519px;height:1px;background:#dddddd;"></div>
<div style="left:468px;top:351px;width:519px;height:1px;background:#dddddd;"></div>
<div style="left:468px;top:367px;width:519px;height:1px;background:#dddddd;"></div>
<div style="left:468px;top:381.5px;width:519px;height:1px;background:#b0b0b0;"></div>
<div class="t" style="left:312.5px;top:325.80px;font-size:8.5px;line-height:8.5px;color:#333333;transform:scaleX(0.9);transform-origin:0 0;">EBITDA</div>
<div class="t" style="left:312.5px;top:341.30px;font-size:8.5px;line-height:8.5px;color:#333333;transform:scaleX(0.9);transform-origin:0 0;">Current Taxes</div>
<div class="t" style="left:312.5px;top:357.10px;font-size:8.5px;line-height:8.5px;color:#333333;transform:scaleX(0.9);transform-origin:0 0;">CapEX</div>
<div class="t" style="left:312.5px;top:372.50px;font-size:8.5px;line-height:8.5px;color:#333333;transform:scaleX(0.9);transform-origin:0 0;">Cash from Working Capital</div>
<div class="t" style="left:312.5px;top:383.80px;font-size:8.5px;line-height:8.5px;color:#333333;transform:scaleX(0.9);transform-origin:0 0;">Unlevered Free Cash Flow</div>
<div class="t" style="right:461.5px;top:326.23px;font-size:8px;line-height:8px;color:#333333;transform:scaleX(0.9);transform-origin:100% 0;">18,955,400</div>
<div class="t" style="right:405.5px;top:326.23px;font-size:8px;line-height:8px;color:#333333;transform:scaleX(0.9);transform-origin:100% 0;">22,617,842</div>
<div class="t" style="right:349.5px;top:326.23px;font-size:8px;line-height:8px;color:#333333;transform:scaleX(0.9);transform-origin:100% 0;">22,569,578</div>
<div class="t" style="right:291.5px;top:326.23px;font-size:8px;line-height:8px;color:#333333;transform:scaleX(0.9);transform-origin:100% 0;">22,454,648</div>
<div class="t" style="right:233.5px;top:326.23px;font-size:8px;line-height:8px;color:#333333;transform:scaleX(0.9);transform-origin:100% 0;">22,429,968</div>
<div class="t" style="right:175.0px;top:326.23px;font-size:8px;line-height:8px;color:#333333;transform:scaleX(0.9);transform-origin:100% 0;">22,404,371</div>
<div class="t" style="right:116.5px;top:326.23px;font-size:8px;line-height:8px;color:#333333;transform:scaleX(0.9);transform-origin:100% 0;">22,397,035</div>
<div class="t" style="right:58.5px;top:326.23px;font-size:8px;line-height:8px;color:#333333;transform:scaleX(0.9);transform-origin:100% 0;">22,377,815</div>
<div class="t" style="right:-3.5px;top:326.23px;font-size:8px;line-height:8px;color:#333333;transform:scaleX(0.9);transform-origin:100% 0;">22,353,709</div>
<div class="t" style="right:461.5px;top:341.73px;font-size:8px;line-height:8px;color:#333333;transform:scaleX(0.9);transform-origin:100% 0;">3,791,080</div>
<div class="t" style="right:405.5px;top:341.73px;font-size:8px;line-height:8px;color:#333333;transform:scaleX(0.9);transform-origin:100% 0;">4,523,568</div>
<div class="t" style="right:349.5px;top:341.73px;font-size:8px;line-height:8px;color:#333333;transform:scaleX(0.9);transform-origin:100% 0;">4,622,067</div>
<div class="t" style="right:291.5px;top:341.73px;font-size:8px;line-height:8px;color:#333333;transform:scaleX(0.9);transform-origin:100% 0;">4,599,081</div>
<div class="t" style="right:233.5px;top:341.73px;font-size:8px;line-height:8px;color:#333333;transform:scaleX(0.9);transform-origin:100% 0;">4,594,145</div>
<div class="t" style="right:175.0px;top:341.73px;font-size:8px;line-height:8px;color:#333333;transform:scaleX(0.9);transform-origin:100% 0;">4,589,025</div>
<div class="t" style="right:116.5px;top:341.73px;font-size:8px;line-height:8px;color:#333333;transform:scaleX(0.9);transform-origin:100% 0;">4,587,558</div>
<div class="t" style="right:58.5px;top:341.73px;font-size:8px;line-height:8px;color:#333333;transform:scaleX(0.9);transform-origin:100% 0;">4,583,714</div>
<div class="t" style="right:-3.5px;top:341.73px;font-size:8px;line-height:8px;color:#333333;transform:scaleX(0.9);transform-origin:100% 0;">4,578,891</div>
<div class="t" style="right:459px;top:357.53px;font-size:8px;line-height:8px;color:#333333;transform:scaleX(0.9);transform-origin:100% 0;">(9,131,500)</div>
<div class="t" style="right:403px;top:357.53px;font-size:8px;line-height:8px;color:#333333;transform:scaleX(0.9);transform-origin:100% 0;">(9,131,500)</div>
<div class="t" style="right:347px;top:357.53px;font-size:8px;line-height:8px;color:#333333;transform:scaleX(0.9);transform-origin:100% 0;">(5,331,500)</div>
<div class="t" style="right:289px;top:357.53px;font-size:8px;line-height:8px;color:#333333;transform:scaleX(0.9);transform-origin:100% 0;">(5,331,500)</div>
<div class="t" style="right:231px;top:357.53px;font-size:8px;line-height:8px;color:#333333;transform:scaleX(0.9);transform-origin:100% 0;">(5,331,500)</div>
<div class="t" style="right:172.5px;top:357.53px;font-size:8px;line-height:8px;color:#333333;transform:scaleX(0.9);transform-origin:100% 0;">(5,331,500)</div>
<div class="t" style="right:114px;top:357.53px;font-size:8px;line-height:8px;color:#333333;transform:scaleX(0.9);transform-origin:100% 0;">(5,131,500)</div>
<div class="t" style="right:56px;top:357.53px;font-size:8px;line-height:8px;color:#333333;transform:scaleX(0.9);transform-origin:100% 0;">(4,131,500)</div>
<div class="t" style="right:-6px;top:357.53px;font-size:8px;line-height:8px;color:#333333;transform:scaleX(0.9);transform-origin:100% 0;">(4,131,500)</div>
<div class="t" style="right:461.5px;top:372.93px;font-size:8px;line-height:8px;color:#84a4e0;transform:scaleX(0.9);transform-origin:100% 0;">1,664,732,370</div>
<div class="t" style="right:405.5px;top:372.93px;font-size:8px;line-height:8px;color:#84a4e0;transform:scaleX(0.9);transform-origin:100% 0;">2,064,720,439</div>
<div class="t" style="right:349.5px;top:372.93px;font-size:8px;line-height:8px;color:#84a4e0;transform:scaleX(0.9);transform-origin:100% 0;">2,367,888,008</div>
<div class="t" style="right:291.5px;top:372.93px;font-size:8px;line-height:8px;color:#84a4e0;transform:scaleX(0.9);transform-origin:100% 0;">2,648,491,483</div>
<div class="t" style="right:233.5px;top:372.93px;font-size:8px;line-height:8px;color:#84a4e0;transform:scaleX(0.9);transform-origin:100% 0;">2,910,593,468</div>
<div class="t" style="right:175.0px;top:372.93px;font-size:8px;line-height:8px;color:#84a4e0;transform:scaleX(0.9);transform-origin:100% 0;">3,166,388,045</div>
<div class="t" style="right:116.5px;top:372.93px;font-size:8px;line-height:8px;color:#84a4e0;transform:scaleX(0.9);transform-origin:100% 0;">3,432,277,085</div>
<div class="t" style="right:58.5px;top:372.93px;font-size:8px;line-height:8px;color:#84a4e0;transform:scaleX(0.9);transform-origin:100% 0;">3,690,192,754</div>
<div class="t" style="right:-3.5px;top:372.93px;font-size:8px;line-height:8px;color:#84a4e0;transform:scaleX(0.9);transform-origin:100% 0;">3,946,055,746</div>
<div class="t" style="right:461.5px;top:384.23px;font-size:8px;line-height:8px;color:#111;font-weight:bold;transform:scaleX(0.9);transform-origin:100% 0;">1,678,347,350</div>
<div class="t" style="right:405.5px;top:384.23px;font-size:8px;line-height:8px;color:#111;font-weight:bold;transform:scaleX(0.9);transform-origin:100% 0;">2,082,730,349</div>
<div class="t" style="right:349.5px;top:384.23px;font-size:8px;line-height:8px;color:#111;font-weight:bold;transform:scaleX(0.9);transform-origin:100% 0;">2,389,748,153</div>
<div class="t" style="right:291.5px;top:384.23px;font-size:8px;line-height:8px;color:#111;font-weight:bold;transform:scaleX(0.9);transform-origin:100% 0;">2,670,213,721</div>
<div class="t" style="right:233.5px;top:384.23px;font-size:8px;line-height:8px;color:#111;font-weight:bold;transform:scaleX(0.9);transform-origin:100% 0;">2,932,286,080</div>
<div class="t" style="right:175.0px;top:384.23px;font-size:8px;line-height:8px;color:#111;font-weight:bold;transform:scaleX(0.9);transform-origin:100% 0;">3,188,049,941</div>
<div class="t" style="right:116.5px;top:384.23px;font-size:8px;line-height:8px;color:#111;font-weight:bold;transform:scaleX(0.9);transform-origin:100% 0;">3,454,130,178</div>
<div class="t" style="right:58.5px;top:384.23px;font-size:8px;line-height:8px;color:#111;font-weight:bold;transform:scaleX(0.9);transform-origin:100% 0;">3,713,022,782</div>
<div class="t" style="right:-3.5px;top:384.23px;font-size:8px;line-height:8px;color:#111;font-weight:bold;transform:scaleX(0.9);transform-origin:100% 0;">3,968,856,841</div>
<div class="t" style="left:33px;top:444.31px;font-size:7.2px;line-height:7.2px;color:#fff;font-weight:bold;transform-origin:0 0;">Discounted Cash Flow Schedule</div>
<div class="t" style="right:460px;top:443.49px;font-size:8.4px;line-height:8.4px;color:#fff;font-weight:bold;transform:scaleX(0.94);transform-origin:100% 0;">2029</div>
<div class="t" style="right:404px;top:443.49px;font-size:8.4px;line-height:8.4px;color:#fff;font-weight:bold;transform:scaleX(0.94);transform-origin:100% 0;">2030</div>
<div class="t" style="right:348px;top:443.49px;font-size:8.4px;line-height:8.4px;color:#fff;font-weight:bold;transform:scaleX(0.94);transform-origin:100% 0;">2031</div>
<div class="t" style="right:290px;top:443.49px;font-size:8.4px;line-height:8.4px;color:#fff;font-weight:bold;transform:scaleX(0.94);transform-origin:100% 0;">2032</div>
<div class="t" style="right:232px;top:443.49px;font-size:8.4px;line-height:8.4px;color:#fff;font-weight:bold;transform:scaleX(0.94);transform-origin:100% 0;">2033</div>
<div class="t" style="right:173.5px;top:443.49px;font-size:8.4px;line-height:8.4px;color:#fff;font-weight:bold;transform:scaleX(0.94);transform-origin:100% 0;">2034</div>
<div class="t" style="right:115px;top:443.49px;font-size:8.4px;line-height:8.4px;color:#fff;font-weight:bold;transform:scaleX(0.94);transform-origin:100% 0;">2035</div>
<div class="t" style="right:57px;top:443.49px;font-size:8.4px;line-height:8.4px;color:#fff;font-weight:bold;transform:scaleX(0.94);transform-origin:100% 0;">2036</div>
<div class="t" style="right:-5px;top:443.49px;font-size:8.4px;line-height:8.4px;color:#fff;font-weight:bold;transform:scaleX(0.94);transform-origin:100% 0;">2037</div>
<div style="left:468px;top:478.5px;width:519px;height:16.5px;background:#f0f0f0;"></div>
<div style="left:468px;top:478.5px;width:519px;height:1px;background:#e2e2e2;"></div>
<div style="left:468px;top:494px;width:519px;height:1px;background:#e2e2e2;"></div>
<div class="t" style="right:461.5px;top:485.33px;font-size:8px;line-height:8px;color:#333333;transform:scaleX(0.9);transform-origin:100% 0;">1,678,347,350</div>
<div class="t" style="right:405.5px;top:485.33px;font-size:8px;line-height:8px;color:#333333;transform:scaleX(0.9);transform-origin:100% 0;">2,082,730,349</div>
<div class="t" style="right:349.5px;top:485.33px;font-size:8px;line-height:8px;color:#333333;transform:scaleX(0.9);transform-origin:100% 0;">2,389,748,153</div>
<div class="t" style="right:291.5px;top:485.33px;font-size:8px;line-height:8px;color:#333333;transform:scaleX(0.9);transform-origin:100% 0;">2,670,213,721</div>
<div class="t" style="right:233.5px;top:485.33px;font-size:8px;line-height:8px;color:#333333;transform:scaleX(0.9);transform-origin:100% 0;">2,932,286,080</div>
<div class="t" style="right:175.0px;top:485.33px;font-size:8px;line-height:8px;color:#333333;transform:scaleX(0.9);transform-origin:100% 0;">3,188,049,941</div>
<div class="t" style="right:116.5px;top:485.33px;font-size:8px;line-height:8px;color:#333333;transform:scaleX(0.9);transform-origin:100% 0;">3,454,130,178</div>
<div class="t" style="right:58.5px;top:485.33px;font-size:8px;line-height:8px;color:#333333;transform:scaleX(0.9);transform-origin:100% 0;">3,713,022,782</div>
<div class="t" style="right:-3.5px;top:485.33px;font-size:8px;line-height:8px;color:#333333;transform:scaleX(0.9);transform-origin:100% 0;">3,968,856,841</div>
<div class="t" style="left:96.8px;top:530.03px;font-size:8px;line-height:8px;color:#222;font-weight:bold;transform:scaleX(0.9067);transform-origin:0 0;">ASSUMPTIONS</div>
<div class="t" style="left:471px;top:530.03px;font-size:8px;line-height:8px;color:#222;font-weight:bold;transform:scaleX(0.8713);transform-origin:0 0;">CASH FLOW PROFILES</div>
<div class="t" style="left:102px;top:545.60px;font-size:8.5px;line-height:8.5px;color:#333333;transform:scaleX(0.9);transform-origin:0 0;">First Year of Forecast</div>
<div style="left:239px;top:539px;width:66px;height:18px;background:#f8f9c4;"></div>
<div class="t" style="left:263.55px;top:546.37px;font-size:7.6px;line-height:7.6px;color:#8191b3;transform-origin:50% 0;">2026</div>
<div class="t" style="right:547px;top:545.60px;font-size:8.5px;line-height:8.5px;color:#333333;transform:scaleX(0.9);transform-origin:100% 0;">Discrete Forecast</div>
<div style="left:469px;top:540px;width:518px;height:20px;background:#f0f0f0;"></div>
<div style="left:469px;top:540px;width:518px;height:1px;background:#e2e2e2;"></div>
<div class="t" style="right:461.5px;top:546.03px;font-size:8px;line-height:8px;color:#333333;transform:scaleX(0.9);transform-origin:100% 0;">1,678,347,350</div>
<div class="t" style="right:405.5px;top:546.03px;font-size:8px;line-height:8px;color:#333333;transform:scaleX(0.9);transform-origin:100% 0;">2,082,730,349</div>
<div class="t" style="right:349.5px;top:546.03px;font-size:8px;line-height:8px;color:#333333;transform:scaleX(0.9);transform-origin:100% 0;">2,389,748,153</div>
<div class="t" style="right:291.5px;top:546.03px;font-size:8px;line-height:8px;color:#333333;transform:scaleX(0.9);transform-origin:100% 0;">2,670,213,721</div>
<div class="t" style="right:233.5px;top:546.03px;font-size:8px;line-height:8px;color:#333333;transform:scaleX(0.9);transform-origin:100% 0;">2,932,286,080</div>
<div class="t" style="right:175.0px;top:546.03px;font-size:8px;line-height:8px;color:#333333;transform:scaleX(0.9);transform-origin:100% 0;">3,188,049,941</div>
<div class="t" style="right:116.5px;top:546.03px;font-size:8px;line-height:8px;color:#333333;transform:scaleX(0.9);transform-origin:100% 0;">3,454,130,178</div>
<div class="t" style="right:58.5px;top:546.03px;font-size:8px;line-height:8px;color:#333333;transform:scaleX(0.9);transform-origin:100% 0;">3,713,022,782</div>
<div class="t" style="right:-3.5px;top:546.03px;font-size:8px;line-height:8px;color:#333333;transform:scaleX(0.9);transform-origin:100% 0;">3,968,856,841</div>
</div>
<div style="left:987px;top:50px;width:13px;height:509px;background:#f3f3f3;"></div>
<div style="left:987px;top:50px;width:1px;height:509px;background:#dcdcdc;"></div>
<div style="left:991.5px;top:62px;width:5.5px;height:170.5px;background:#858585;border-radius:3px;"></div>
<svg style="position:absolute;left:991px;top:54px" width="7" height="5" viewBox="0 0 7 5"><path d="M3.5 0.3L6.8 4.5H0.2z" fill="#555"/></svg>
<svg style="position:absolute;left:990.5px;top:552px" width="7" height="5" viewBox="0 0 7 5"><path d="M3.5 4.7L6.8 0.5H0.2z" fill="#444"/></svg>
<div style="left:0px;top:559px;width:1000px;height:18.5px;background:#e6e7ea;"></div>
<div style="left:14px;top:554.5px;width:973px;height:1px;background:#e4e4e4;"></div>
<svg style="position:absolute;left:16px;top:565px" width="6" height="8" viewBox="0 0 6 8"><path d="M4.5 0.8L1.5 4L4.5 7.2" fill="none" stroke="#8a8a8a" stroke-width="1"/></svg>
<svg style="position:absolute;left:36px;top:565px" width="6" height="8" viewBox="0 0 6 8"><path d="M1.5 0.8L4.5 4L1.5 7.2" fill="none" stroke="#8a8a8a" stroke-width="1"/></svg>
<div style="left:56.8px;top:568px;width:2px;height:2px;background:#222;"></div>
<div style="left:59.8px;top:568px;width:2px;height:2px;background:#222;"></div>
<div style="left:62.8px;top:568px;width:2px;height:2px;background:#222;"></div>
<div style="left:72.5px;top:561.5px;width:62.5px;height:15px;background:#f9f9cd;"></div>
<div class="t" style="left:79.5px;top:565.68px;font-size:9px;line-height:9px;color:#1e1e1e;transform:scaleX(0.9145);transform-origin:0 0;">CAPEX 2045</div>
<div style="left:140px;top:561.5px;width:57.5px;height:15px;background:#f9f9cd;"></div>
<div class="t" style="left:145.75px;top:565.68px;font-size:9px;line-height:9px;color:#1e1e1e;transform:scaleX(0.9309);transform-origin:0 0;">OPEX 2045</div>
<div style="left:493.5px;top:561.5px;width:48.0px;height:15px;background:#f8f89c;"></div>
<div class="t" style="left:498.6px;top:565.68px;font-size:9px;line-height:9px;color:#1e1e1e;transform:scaleX(0.9336);transform-origin:0 0;">Expenses</div>
<div style="left:547.5px;top:561.5px;width:88.5px;height:15px;background:#f8f89c;"></div>
<div class="t" style="left:553px;top:565.68px;font-size:9px;line-height:9px;color:#1e1e1e;transform:scaleX(0.9746);transform-origin:0 0;">COGS Assumptions</div>
<div style="left:642px;top:561.5px;width:98px;height:15px;background:#f8f89c;"></div>
<div class="t" style="left:648.8px;top:565.68px;font-size:9px;line-height:9px;color:#1e1e1e;transform:scaleX(0.9867);transform-origin:0 0;">Salaries Assumptions</div>
<div class="t" style="left:207.5px;top:565.68px;font-size:9px;line-height:9px;color:#2a2a2a;transform:scaleX(0.9640);transform-origin:0 0;">Sales Summary Charts</div>
<div class="t" style="left:315.6px;top:565.68px;font-size:9px;line-height:9px;color:#2a2a2a;transform:scaleX(0.9879);transform-origin:0 0;">Key Metrics Charts</div>
<div class="t" style="left:407.8px;top:565.68px;font-size:9px;line-height:9px;color:#2a2a2a;transform:scaleX(0.9514);transform-origin:0 0;">KPI Charts</div>
<div class="t" style="left:465.8px;top:565.68px;font-size:9px;line-height:9px;color:#2a2a2a;transform:scaleX(0.9162);transform-origin:0 0;">BEA</div>
<div class="t" style="left:813.8px;top:565.68px;font-size:9px;line-height:9px;color:#2a2a2a;transform:scaleX(0.9346);transform-origin:0 0;">CAPS Table</div>
<div style="left:306.5px;top:564px;width:1px;height:10px;background:#dcdde0;"></div>
<div style="left:399.5px;top:564px;width:1px;height:10px;background:#dcdde0;"></div>
<div style="left:457.5px;top:564px;width:1px;height:10px;background:#dcdde0;"></div>
<div style="left:741px;top:559px;width:61.5px;height:18.5px;background:#ffffff;"></div>
<div class="t" style="left:751.7px;top:563.18px;font-size:9px;line-height:9px;color:#1a1a1a;font-weight:bold;transform:scaleX(0.9575);transform-origin:0 0;">DCF Model</div>
<div style="left:751.7px;top:573.8px;width:44.5px;height:1.2px;background:#2a8a5e;"></div>
<div class="t" style="left:877px;top:565.92px;font-size:8.6px;line-height:8.6px;color:#333;transform-origin:0 0;">(</div>
<div style="left:886.3px;top:568.3px;width:2px;height:2px;background:#222;"></div>
<div style="left:889.3px;top:568.3px;width:2px;height:2px;background:#222;"></div>
<div style="left:892.3px;top:568.3px;width:2px;height:2px;background:#222;"></div>
<div style="left:907px;top:568.8px;width:8px;height:1.1px;background:#444;"></div>
<div style="left:910.5px;top:565.3px;width:1.1px;height:8px;background:#444;"></div>
<div style="left:931.5px;top:565.5px;width:1.5px;height:1.5px;background:#555;"></div>
<div style="left:931.5px;top:568.5px;width:1.5px;height:1.5px;background:#555;"></div>
<div style="left:931.5px;top:571.5px;width:1.5px;height:1.5px;background:#555;"></div>
<div style="left:944px;top:560px;width:24px;height:14.5px;background:#fafafa;border-radius:2px;"></div>
<div style="left:976px;top:560px;width:14.5px;height:14.5px;background:#fafafa;border-radius:2px;"></div>
<svg style="position:absolute;left:945px;top:566px" width="5" height="6" viewBox="0 0 5 6"><path d="M4.5 0.5V5.5L0.5 3z" fill="#555"/></svg>
<div style="left:953px;top:566.3px;width:14px;height:5.7px;background:#5a5a5a;border-radius:3px;"></div>
<svg style="position:absolute;left:980px;top:566px" width="5" height="6" viewBox="0 0 5 6"><path d="M0.5 0.5V5.5L4.5 3z" fill="#555"/></svg>
<div style="left:0px;top:577.5px;width:1000px;height:15.5px;background:#f3f3f3;"></div>
<div class="t" style="left:7.7px;top:583.24px;font-size:7.4px;line-height:7.4px;color:#555;transform:scaleX(0.8415);transform-origin:0 0;">Ready</div>
<svg style="position:absolute;left:40px;top:583px" width="9" height="9" viewBox="0 0 9 9"><rect x="0.5" y="0.5" width="8" height="8" fill="none" stroke="#555" stroke-width="1"/><rect x="0.5" y="0.5" width="8" height="2" fill="#777"/><circle cx="5.5" cy="5.5" r="2" fill="#444"/></svg>
<svg style="position:absolute;left:60px;top:582px" width="10" height="10" viewBox="0 0 10 10"><circle cx="4" cy="1.5" r="1.1" fill="#444"/><path d="M0.5 3.3h7M4 3.3v3M4 6.3L2 9.5M4 6.3L6 9.5" fill="none" stroke="#444" stroke-width="1"/><path d="M6 6l3 3M9 6l-3 3" stroke="#444" stroke-width="0.9"/></svg>
<div class="t" style="left:72px;top:583.24px;font-size:7.4px;line-height:7.4px;color:#222;font-weight:bold;transform:scaleX(0.8934);transform-origin:0 0;">Accessibility: Investigate</div>
<div style="left:808px;top:578px;width:23px;height:15px;background:#dcdcdc;"></div>
<svg style="position:absolute;left:814px;top:582px" width="10" height="10" viewBox="0 0 10 10"><path d="M0.5 0.5h9v9h-9zM0.5 3.5h9M0.5 6.5h9M3.5 0.5v9M6.5 0.5v9" fill="none" stroke="#444" stroke-width="1"/></svg>
<svg style="position:absolute;left:840px;top:582px" width="10" height="10" viewBox="0 0 10 10"><path d="M0.5 0.5h9v9h-9zM3.5 0.5v9M6.5 0.5v9" fill="none" stroke="#555" stroke-width="1"/><rect x="1" y="1" width="8" height="8" fill="#888" opacity="0.5"/></svg>
<svg style="position:absolute;left:866px;top:582px" width="10" height="10" viewBox="0 0 10 10"><path d="M0.5 0.5h9v9h-9zM0.5 5.5h5v-5" fill="none" stroke="#555" stroke-width="1"/></svg>
<div style="left:888px;top:587px;width:6px;height:1px;background:#777;"></div>
<div style="left:896px;top:587px;width:64px;height:1px;background:#888;"></div>
<div style="left:921.5px;top:583.5px;width:3.5px;height:8px;background:#444;"></div>
<div style="left:930px;top:585.5px;width:1px;height:4px;background:#999;"></div>
<div style="left:966px;top:587px;width:4px;height:1px;background:#888;"></div>
<div style="left:967.5px;top:585.5px;width:1px;height:4px;background:#888;"></div>
<div class="t" style="left:978px;top:583.74px;font-size:7.4px;line-height:7.4px;color:#555;transform:scaleX(0.8777);transform-origin:0 0;">82%</div>
</body></html>
